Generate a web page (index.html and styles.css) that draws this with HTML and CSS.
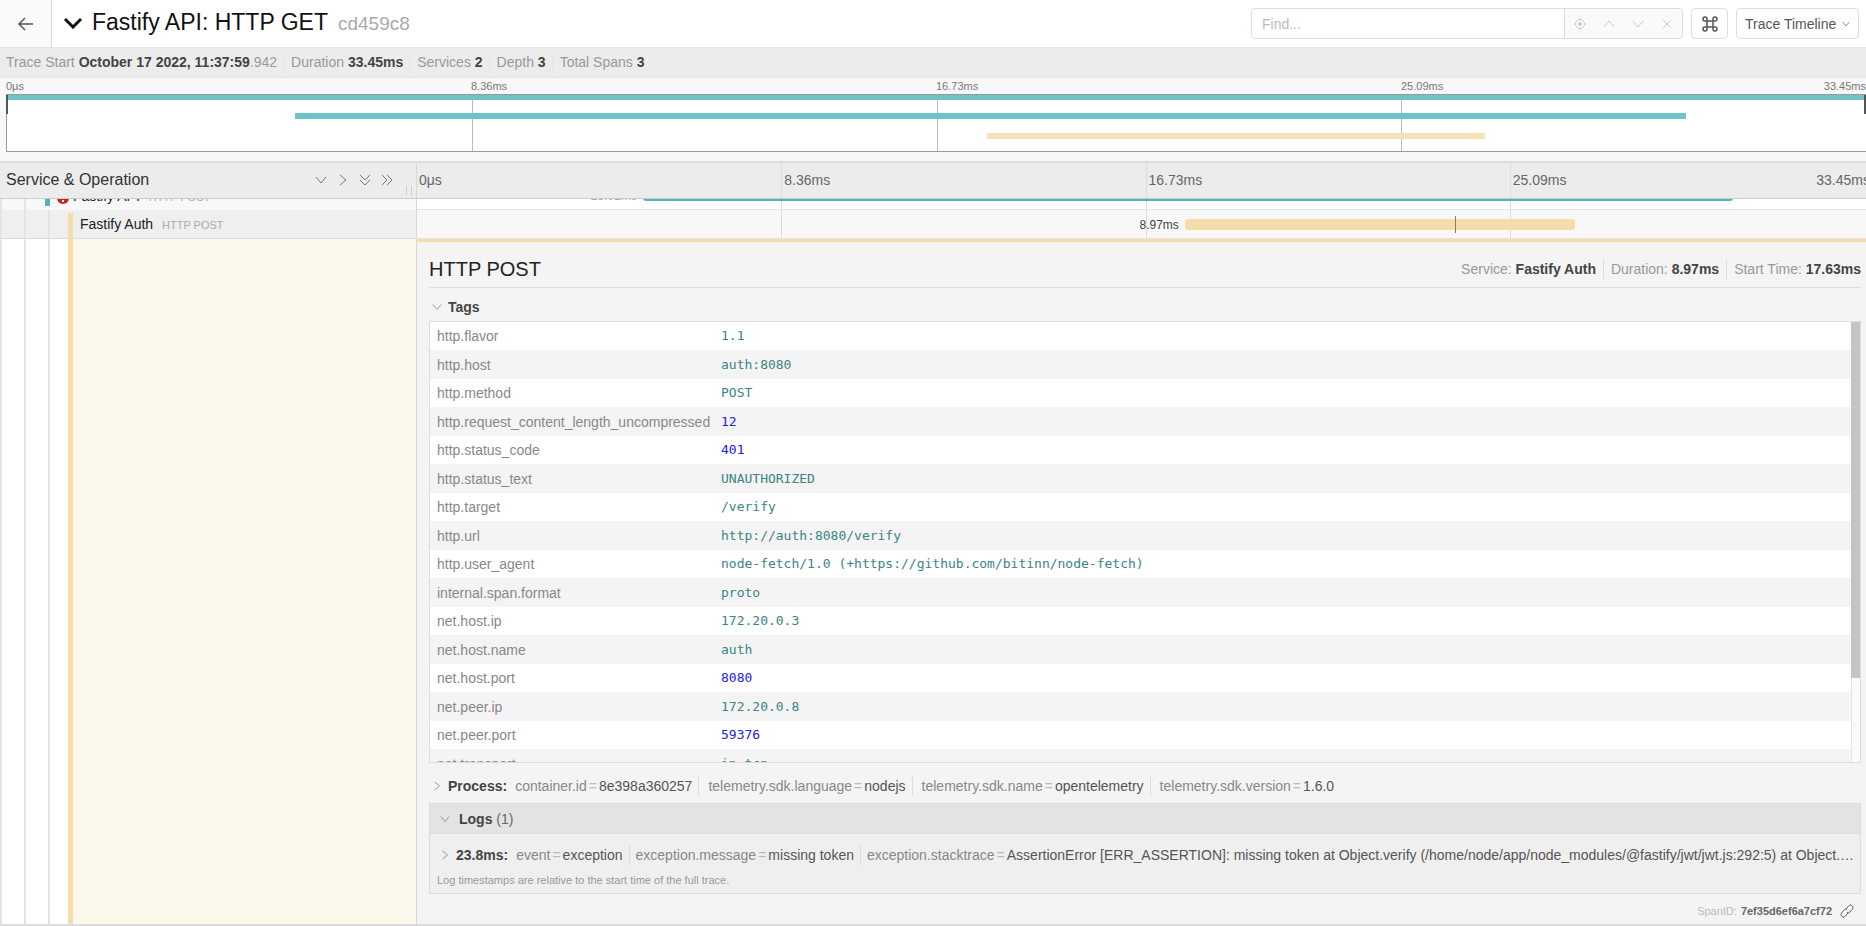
FILE: index.html
```html
<!DOCTYPE html>
<html lang="en">
<head>
  <meta charset="UTF-8">
  <title>Fastify API: HTTP GET</title>
  <link rel="stylesheet" href="styles.css">
</head>
<body>
  <svg class="sprite">
    <symbol id="down" viewBox="0 0 12 12"><path d="M1 3l5 6 5-6"/></symbol>
    <symbol id="up" viewBox="0 0 12 12"><path d="M1 9l5-6 5 6"/></symbol>
    <symbol id="right" viewBox="0 0 12 12"><path d="M3 1l6 5-6 5"/></symbol>
    <symbol id="double-down" viewBox="0 0 12 12"><path d="M1 1l5 5 5-5M1 6l5 5 5-5"/></symbol>
    <symbol id="double-right" viewBox="0 0 12 12"><path d="M1 1l5 5-5 5M6 1l5 5-5 5"/></symbol>
  </svg>

  <header class="page-header">
    <a class="back" href="#" aria-label="Back">
      <svg viewBox="0 0 16 16"><path d="M7 2L1 8l6 6M1 8h14"/></svg>
    </a>
    <button class="title-toggle">
      <svg viewBox="0 0 20 12"><path d="M2 2l8 8 8-8"/></svg>
      <h1>Fastify API: HTTP GET <small>cd459c8</small></h1>
    </button>
    <div class="find">
      <input type="text" placeholder="Find..." aria-label="Find">
      <button aria-label="Locate" disabled><svg viewBox="0 0 12 12"><circle cx="6" cy="6" r="4.500"/><circle class="dot" cx="6" cy="6" r="1.500"/><path d="M6 0v2M6 10v2M0 6h2M10 6h2"/></svg></button>
      <button aria-label="Previous" disabled><svg><use href="#up"/></svg></button>
      <button aria-label="Next" disabled><svg><use href="#down"/></svg></button>
      <button aria-label="Clear" disabled><svg viewBox="0 0 12 12"><path d="M2 2l8 8M10 2l-8 8"/></svg></button>
    </div>
    <button class="shortcuts" aria-label="Keyboard shortcuts">
      <svg viewBox="0 0 16 16"><path d="M5 5V3a2 2 0 1 0-2 2h10a2 2 0 1 0-2-2v10a2 2 0 1 0 2-2H3a2 2 0 1 0 2 2z"/></svg>
    </button>
    <div class="view-select">
      <select aria-label="View"><option>Trace Timeline</option></select>
      <svg><use href="#down"/></svg>
    </div>
  </header>

  <ul class="summary">
    <li>Trace Start <b>October 17 2022, 11:37:59</b>.942</li>
    <li>Duration <b>33.45ms</b></li>
    <li>Services <b>2</b></li>
    <li>Depth <b>3</b></li>
    <li>Total Spans <b>3</b></li>
  </ul>

  <section class="minimap">
    <div class="minimap-ticks"><span>0μs</span><span>8.36ms</span><span>16.73ms</span><span>25.09ms</span><span class="last">33.45ms</span></div>
    <div class="minimap-graph">
      <i></i><i></i><i></i><i></i>
      <div class="mini-bar api" style="left: 0; width: 100%"></div>
      <div class="mini-bar api second" style="left: 15.5%; width: 74.8%"></div>
      <div class="mini-bar auth third" style="left: 52.7%; width: 26.8%"></div>
      <div class="handle"></div>
      <div class="handle end"></div>
    </div>
  </section>

  <main class="timeline">
    <div class="row timeline-header">
      <div class="name-col">
        <h2>Service &amp; Operation</h2>
        <button aria-label="Expand +1"><svg><use href="#down"/></svg></button>
        <button aria-label="Collapse +1"><svg><use href="#right"/></svg></button>
        <button aria-label="Expand all"><svg><use href="#double-down"/></svg></button>
        <button aria-label="Collapse all"><svg><use href="#double-right"/></svg></button>
        <span class="resizer"></span>
      </div>
      <div class="ticks"><span>0μs</span><span>8.36ms</span><span>16.73ms</span><span>25.09ms</span><span class="last">33.45ms</span></div>
    </div>

    <!-- scrolled partly under the header -->
    <div class="scrolled">
      <div class="row span-row">
        <div class="name-col">
          <i class="guide"></i><i class="guide"></i>
          <div class="span-name api">
            <svg class="error" viewBox="0 0 12 12"><circle cx="6" cy="6" r="6"/><path d="M6 2v5M6 8v2"/></svg>
            Fastify API <small>HTTP POST</small>
          </div>
        </div>
        <div class="ticks">
          <span></span><span></span><span></span><span></span>
          <div class="bar api" style="left: 15.5%; width: 74.8%"><em>25.02ms</em></div>
        </div>
      </div>
    </div>

    <div class="row span-row selected">
      <div class="name-col">
        <i class="guide"></i><i class="guide"></i><i class="guide"></i>
        <div class="span-name auth">Fastify Auth <small>HTTP POST</small></div>
      </div>
      <div class="ticks">
        <span></span><span></span><span></span><span></span>
        <div class="bar auth" style="left: 52.7%; width: 26.8%"><em>8.97ms</em><b class="log-mark" style="left: 69.1%"></b></div>
      </div>
    </div>

    <div class="row detail-row">
      <div class="name-col">
        <i class="guide"></i><i class="guide"></i><i class="guide"></i>
        <div class="detail-accent"></div>
      </div>
      <section class="detail">
        <div class="detail-head">
          <h2>HTTP POST</h2>
          <ul>
            <li>Service: <b>Fastify Auth</b></li>
            <li>Duration: <b>8.97ms</b></li>
            <li>Start Time: <b>17.63ms</b></li>
          </ul>
        </div>

        <button class="accordion"><svg><use href="#down"/></svg><b>Tags</b></button>
        <div class="tags">
          <div class="tags-view">
            <table>
              <tr><th>http.flavor</th><td>1.1</td></tr>
              <tr><th>http.host</th><td>auth:8080</td></tr>
              <tr><th>http.method</th><td>POST</td></tr>
              <tr><th>http.request_content_length_uncompressed</th><td class="num">12</td></tr>
              <tr><th>http.status_code</th><td class="num">401</td></tr>
              <tr><th>http.status_text</th><td>UNAUTHORIZED</td></tr>
              <tr><th>http.target</th><td>/verify</td></tr>
              <tr><th>http.url</th><td>http://auth:8080/verify</td></tr>
              <tr><th>http.user_agent</th><td>node-fetch/1.0 (+https://github.com/bitinn/node-fetch)</td></tr>
              <tr><th>internal.span.format</th><td>proto</td></tr>
              <tr><th>net.host.ip</th><td>172.20.0.3</td></tr>
              <tr><th>net.host.name</th><td>auth</td></tr>
              <tr><th>net.host.port</th><td class="num">8080</td></tr>
              <tr><th>net.peer.ip</th><td>172.20.0.8</td></tr>
              <tr><th>net.peer.port</th><td class="num">59376</td></tr>
              <tr><th>net.transport</th><td>ip_tcp</td></tr>
            </table>
          </div>
          <div class="scrollbar"><div class="thumb"></div></div>
        </div>

        <button class="accordion process">
          <svg><use href="#right"/></svg><b>Process:</b>
          <span class="pair">container.id<i>=</i><em>8e398a360257</em></span>
          <span class="pair">telemetry.sdk.language<i>=</i><em>nodejs</em></span>
          <span class="pair">telemetry.sdk.name<i>=</i><em>opentelemetry</em></span>
          <span class="pair">telemetry.sdk.version<i>=</i><em>1.6.0</em></span>
        </button>

        <div class="logs">
          <button class="accordion logs-head"><svg><use href="#down"/></svg><b>Logs</b>&nbsp;(1)</button>
          <button class="accordion log">
            <svg><use href="#right"/></svg><b>23.8ms:</b>
            <span class="pair">event<i>=</i><em>exception</em></span>
            <span class="pair">exception.message<i>=</i><em>missing token</em></span>
            <span class="pair">exception.stacktrace<i>=</i><em>AssertionError [ERR_ASSERTION]: missing token at Object.verify (/home/node/app/node_modules/@fastify/jwt/jwt.js:292:5) at Object.…</em></span>
          </button>
          <p>Log timestamps are relative to the start time of the full trace.</p>
        </div>

        <div class="span-id">
          <span>SpanID:</span> <b>7ef35d6ef6a7cf72</b>
          <a href="#" aria-label="Copy link to span"><svg viewBox="0 0 14 14"><path d="M6 5l2.500-3a2.300 2.300 0 0 1 4 3L10 8a2.300 2.300 0 0 1-3 .5M8 9l-2.500 3a2.300 2.300 0 0 1-4-3L4 6a2.300 2.300 0 0 1 3-.5"/></svg></a>
        </div>
      </section>
    </div>
  </main>
</body>
</html>
```
FILE: styles.css
```css
* {
  box-sizing: border-box;
}

body {
  margin: 0;
  overflow-x: hidden;
  font: 14px/20px "Liberation Sans", Arial, sans-serif;
  color: #555;
  background: #fff;
}

h1, h2, p, ul {
  margin: 0;
  padding: 0;
  font-weight: normal;
}

ul {
  display: flex;
  list-style: none;
}

button, input, select {
  font: inherit;
  color: inherit;
  margin: 0;
  padding: 0;
  border: 0;
  background: none;
}

em, i {
  font-style: normal;
}

svg {
  width: 12px;
  height: 12px;
  flex: none;
  fill: none;
  stroke: currentColor;
}

.sprite {
  display: none;
}

/* header */
.page-header {
  display: flex;
  align-items: center;
  height: 47px;
  padding-right: 7px;
}

.back {
  display: flex;
  align-items: center;
  justify-content: center;
  width: 52px;
  height: 47px;
  background: #fafafa;
  border-right: 1px solid #ddd;
  color: #555;
}

.back svg {
  width: 16px;
  height: 16px;
  stroke-width: 1.5;
}

.title-toggle {
  display: flex;
  align-items: center;
  gap: 9px;
  margin-left: 11px;
  margin-right: auto;
  padding-bottom: 2px;
  color: #111;
}

.title-toggle svg {
  width: 20px;
  height: 12px;
  stroke-width: 3;
}

.title-toggle h1 {
  font-size: 23px;
  line-height: 28px;
}

.title-toggle small {
  margin-left: 4px;
  font-size: 19px;
  color: #aaa;
}

.find {
  display: flex;
  width: 432px;
  height: 31px;
  border: 1px solid #ddd;
  border-radius: 4px;
  background: #fafafa;
  padding-right: 1px;
}

.find input {
  flex: 1;
  min-width: 0;
  padding: 0 10px;
  background: #fff;
  border-right: 1px solid #ddd;
  border-radius: 4px 0 0 4px;
}

.find input::placeholder {
  color: #bbb;
}

.find button {
  display: flex;
  align-items: center;
  justify-content: center;
  width: 29px;
  color: #ccc;
}

.find .dot {
  fill: currentColor;
}

.shortcuts,
.view-select {
  display: flex;
  align-items: center;
  height: 31px;
  margin-left: 8px;
  border: 1px solid #ddd;
  border-radius: 4px;
}

.shortcuts {
  justify-content: center;
  width: 37px;
}

.shortcuts svg {
  width: 16px;
  height: 16px;
  stroke-width: 1.5;
}

.view-select {
  padding: 0 8px;
}

.view-select select {
  appearance: none;
  outline: none;
}

.view-select svg {
  width: 8px;
  height: 8px;
  margin-left: 5px;
}

.summary {
  padding: 4px 6px;
  height: 31px;
  background: #ececec;
  border-top: 1px solid #e4e4e4;
  border-bottom: 1px solid #e4e4e4;
  color: #999;
}

.summary b {
  color: #444;
}

.summary li + li {
  margin-left: 6px;
  padding-left: 7px;
  border-left: 1px solid #e6e6e6;
}

/* minimap */
.minimap {
  padding: 0 0 9px 6px;
  background: #f8f8f8;
}

.minimap-ticks {
  display: grid;
  grid-template-columns: repeat(4, 1fr) 0;
  font-size: 11px;
  line-height: 16px;
  color: #777;
}

.minimap-ticks .last,
.ticks .last {
  justify-self: end;
}

.minimap-graph {
  position: relative;
  display: grid;
  grid-template-columns: repeat(4, 1fr);
  height: 58px;
  background: #fff;
  border: 1px solid #999;
  border-right: 0;
}

.minimap-graph i + i {
  border-left: 1px solid #bbb;
}

.mini-bar {
  position: absolute;
  top: 0;
  height: 5px;
}

.mini-bar.second {
  top: 18px;
  height: 6px;
}

.mini-bar.third {
  top: 38px;
  height: 6px;
}

.mini-bar.api {
  background: #6cc3c8;
}

.mini-bar.auth {
  background: #f6e1b8;
}

.handle {
  position: absolute;
  top: 0;
  left: -1px;
  width: 2px;
  height: 19px;
  background: #555;
}

.handle.end {
  left: auto;
  right: 0;
}

/* timeline */
.row {
  display: grid;
  grid-template-columns: 417px 1fr;
}

.name-col {
  display: flex;
  border-right: 1px solid #d8d8d8;
}

/* the tick area runs a little past the window edge */
.ticks {
  position: relative;
  display: grid;
  grid-template-columns: repeat(4, 1fr) 0;
  margin-right: -8px;
}

.timeline-header {
  height: 38px;
  background: #ececec;
  border-top: 2px solid #ddd;
  border-bottom: 1px solid #ccc;
}

.timeline-header .name-col {
  position: relative;
  align-items: center;
  gap: 10px;
  padding: 0 23px 1px 6px;
  color: #777;
}

.timeline-header h2 {
  flex: 1;
  font-size: 16px;
  color: #333;
}

.timeline-header button {
  display: flex;
}

.resizer {
  position: absolute;
  right: 4px;
  bottom: 3px;
  width: 6px;
  height: 9px;
  border: 1px solid #ccc;
  border-width: 0 1px;
}

.timeline-header .ticks {
  line-height: 34px;
  color: #666;
}

.timeline-header .ticks span {
  padding-left: 2px;
}

.timeline-header .ticks .last {
  padding: 0 4px 0 0;
  border: 0;
}

.ticks span + span {
  border-left: 1px solid #ddd;
}

.scrolled {
  display: flex;
  align-items: flex-end;
  height: 11px;
  overflow: hidden;
}

.span-row {
  flex: 1;
  height: 29px;
}

.span-row .name-col {
  background: #f8f8f8;
}

.span-row .ticks {
  border-bottom: 1px solid #e4e4e4;
}

.span-row.selected .name-col {
  background: #efefef;
  border-bottom: 1px solid #ddd;
}

.span-row.selected .ticks {
  background: #f8f8f8;
}

.guide {
  width: 24px;
  border-left: 2px solid #e4e4e4;
}

.guide:nth-of-type(3) {
  width: 20px;
}

.span-name {
  align-self: flex-end;
  height: 25px;
  padding-left: 7px;
  line-height: 22px;
  color: #222;
  border-left: 5px solid #f5dcaa;
}

.span-name small {
  margin-left: 5px;
  font-size: 11px;
  color: #aaa;
}

.span-name.api {
  align-self: flex-start;
  margin-left: -3px;
  padding-top: 4px;
  border-color: #55b5bd;
}

.error {
  vertical-align: -3px;
  stroke: #fff;
  stroke-width: 2;
}

.error circle {
  fill: #c22;
  stroke: none;
}

.bar {
  position: absolute;
  top: 9px;
  height: 11px;
  border-radius: 3px;
}

.bar.api {
  background: #4fb3bb;
}

.bar.auth {
  background: #f5dcaa;
}

.bar em {
  position: absolute;
  right: 100%;
  margin-right: 6px;
  font-size: 12px;
  line-height: 12px;
  color: #444;
}

.bar.api em {
  color: #aaa;
}

.log-mark {
  position: absolute;
  top: -3px;
  width: 1px;
  height: 17px;
  background: #8c7d60;
}

.detail-row {
  border-bottom: 2px solid #ddd;
}

.detail-accent {
  flex: 1;
  background: #fdf8ec;
  border-left: 5px solid #f5dcaa;
}

/* span detail */
.detail {
  min-width: 0;
  padding: 12px 5px 2px 12px;
  background: #f4f4f4;
  border-top: 3px solid #f5dcaa;
}

.detail-head {
  display: flex;
  align-items: center;
  justify-content: space-between;
  padding-bottom: 3px;
  border-bottom: 1px solid #ddd;
  color: #999;
}

.detail-head h2 {
  font-size: 20px;
  line-height: 30px;
  color: #222;
}

.detail-head b {
  color: #444;
}

.detail-head li + li {
  margin-left: 7px;
  padding-left: 7px;
  border-left: 1px solid #ddd;
}

.accordion {
  display: flex;
  align-items: center;
  width: 100%;
  height: 33px;
  padding-top: 4px;
  padding-left: 3px;
  white-space: nowrap;
  color: #666;
}

.accordion svg {
  width: 10px;
  height: 10px;
  margin-right: 6px;
  color: #888;
}

.accordion b {
  color: #444;
}

.tags {
  display: flex;
  height: 442px;
  border: 1px solid #ddd;
}

.tags-view {
  flex: 1;
  overflow: hidden;
}

.tags table {
  width: 100%;
  border-collapse: collapse;
  background: #fff;
}

.tags th,
.tags td {
  height: 28px;
  padding: 0 0 0 7px;
  text-align: left;
}

.tags th {
  width: 284px;
  font-weight: normal;
  color: #888;
}

.tags td {
  font: 13px/20px "DejaVu Sans Mono", monospace;
  color: #3a8484;
}

.tags .num {
  color: #2222e0;
}

.tags tr:nth-child(even) {
  background: #f4f4f4;
}

.tags tr:nth-child(even) td {
  height: 29px;
}

.scrollbar {
  width: 9px;
  background: #fafafa;
  border-left: 1px solid #e4e4e4;
}

.thumb {
  height: 81%;
  margin-left: -1px;
  background: #c4c4c4;
}

.process {
  height: 40px;
  padding-top: 5px;
}

.pair {
  margin-left: 6px;
  color: #888;
}

b + .pair {
  margin-left: 8px;
}

.pair + .pair {
  padding-left: 6px;
  border-left: 1px solid #ddd;
}

.process .pair + .pair {
  padding-left: 9px;
}

.pair i {
  margin: 0 2px;
  color: #bbb;
}

.pair em {
  color: #555;
}

.logs {
  background: #efefef;
  border: 1px solid #ddd;
}

.logs-head {
  height: 30px;
  padding: 0 0 0 10px;
  background: #e3e3e3;
  border-bottom: 1px solid #ddd;
}

.logs-head svg {
  margin-right: 9px;
}

.log {
  height: 37px;
  padding: 5px 4px 0 10px;
}

.log .pair:last-child {
  overflow: hidden;
  text-overflow: ellipsis;
}

.logs p {
  padding: 1px 7px 5px;
  font-size: 11px;
  line-height: 16px;
  color: #999;
}

.span-id {
  display: flex;
  align-items: center;
  justify-content: flex-end;
  gap: 4px;
  height: 28px;
  padding-top: 5px;
  padding-right: 7px;
  font-size: 11px;
  color: #bbb;
}

.span-id b {
  color: #666;
}

.span-id a {
  display: flex;
  margin-left: 4px;
  color: #666;
}

.span-id svg {
  width: 14px;
  height: 14px;
}
```
